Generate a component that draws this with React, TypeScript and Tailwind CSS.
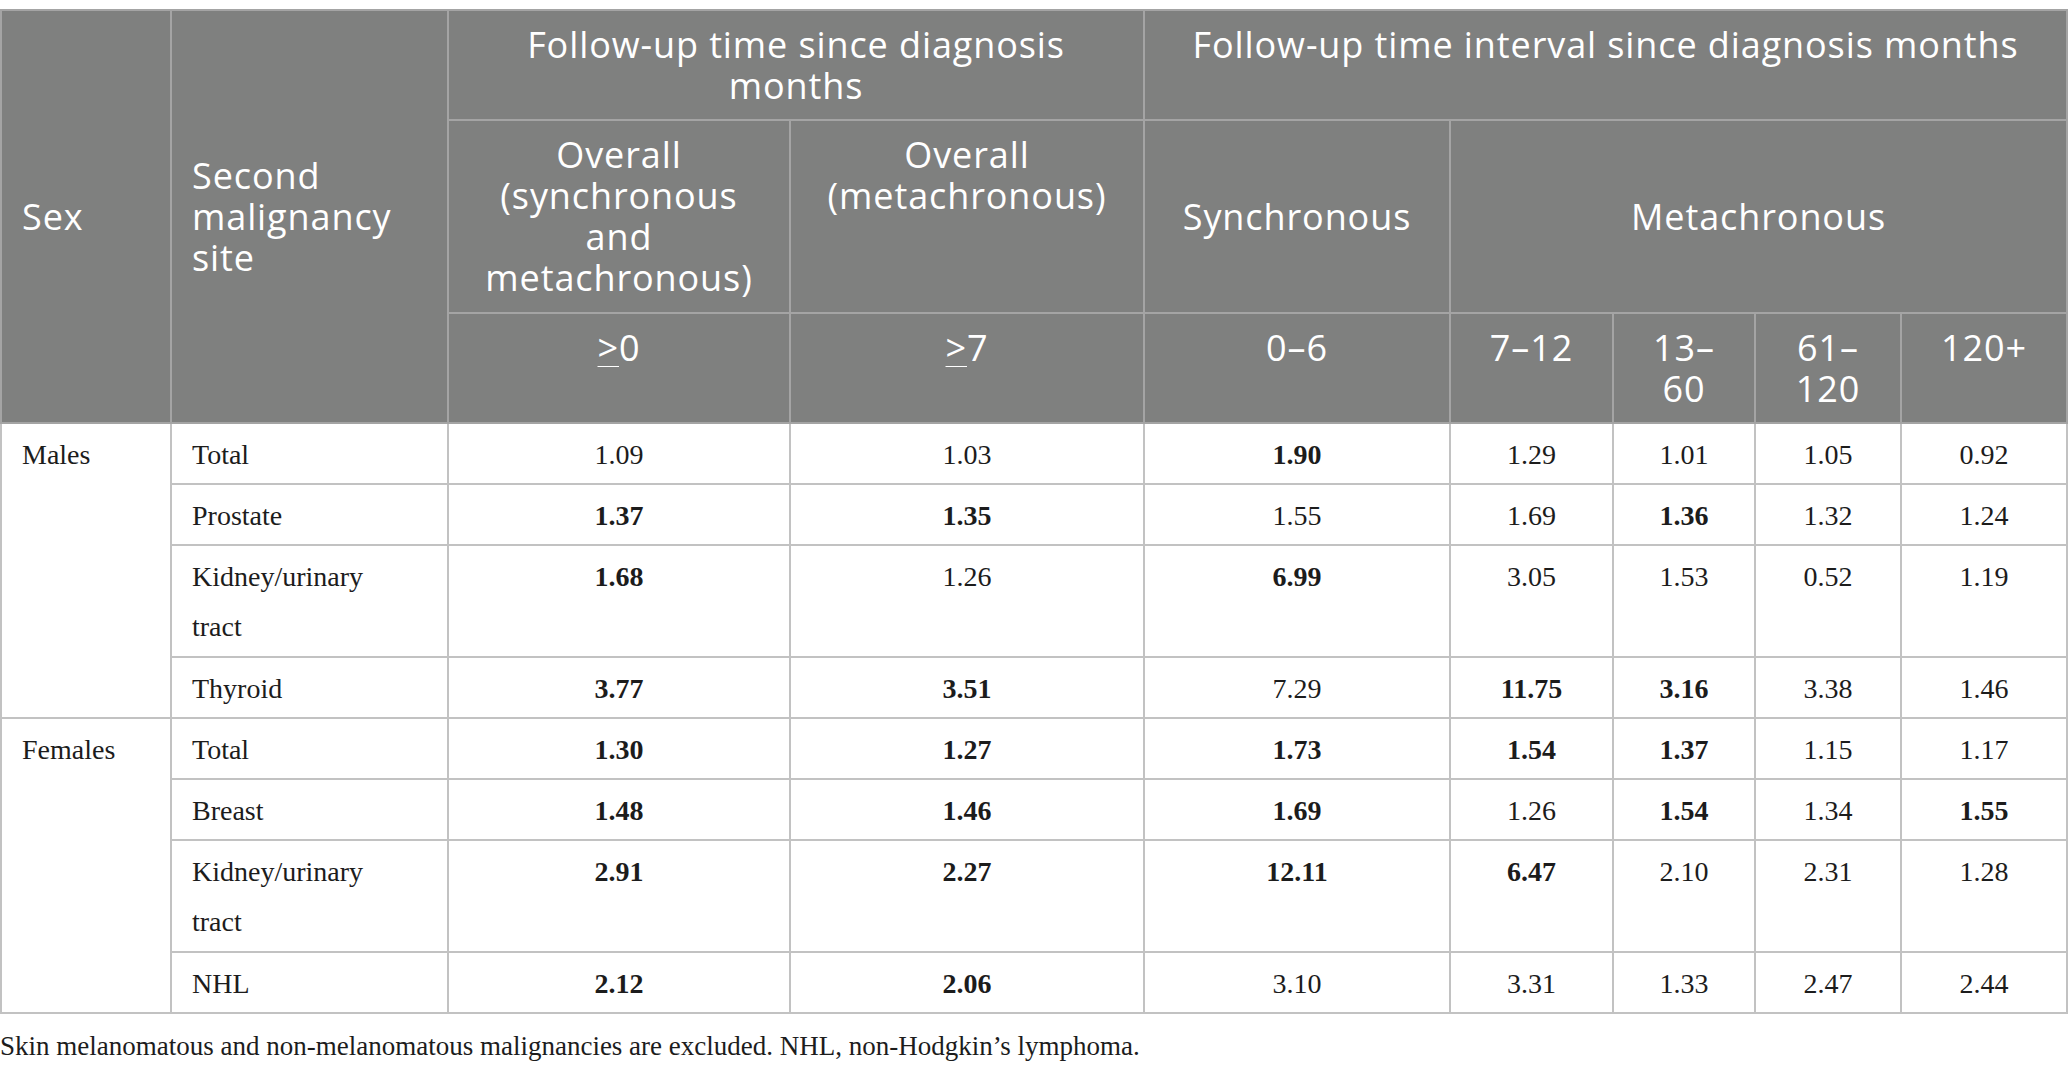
import React from 'react';

type Cell = { v: string; b?: boolean };

const rows: { sex?: string; span?: number; site: React.ReactNode; tall?: boolean; cells: Cell[] }[] = [
  {
    sex: 'Males',
    span: 4,
    site: 'Total',
    cells: [{ v: '1.09' }, { v: '1.03' }, { v: '1.90', b: true }, { v: '1.29' }, { v: '1.01' }, { v: '1.05' }, { v: '0.92' }],
  },
  {
    site: 'Prostate',
    cells: [{ v: '1.37', b: true }, { v: '1.35', b: true }, { v: '1.55' }, { v: '1.69' }, { v: '1.36', b: true }, { v: '1.32' }, { v: '1.24' }],
  },
  {
    site: (
      <>
        Kidney/urinary
        <br />
        tract
      </>
    ),
    tall: true,
    cells: [{ v: '1.68', b: true }, { v: '1.26' }, { v: '6.99', b: true }, { v: '3.05' }, { v: '1.53' }, { v: '0.52' }, { v: '1.19' }],
  },
  {
    site: 'Thyroid',
    cells: [{ v: '3.77', b: true }, { v: '3.51', b: true }, { v: '7.29' }, { v: '11.75', b: true }, { v: '3.16', b: true }, { v: '3.38' }, { v: '1.46' }],
  },
  {
    sex: 'Females',
    span: 4,
    site: 'Total',
    cells: [{ v: '1.30', b: true }, { v: '1.27', b: true }, { v: '1.73', b: true }, { v: '1.54', b: true }, { v: '1.37', b: true }, { v: '1.15' }, { v: '1.17' }],
  },
  {
    site: 'Breast',
    cells: [{ v: '1.48', b: true }, { v: '1.46', b: true }, { v: '1.69', b: true }, { v: '1.26' }, { v: '1.54', b: true }, { v: '1.34' }, { v: '1.55', b: true }],
  },
  {
    site: (
      <>
        Kidney/urinary
        <br />
        tract
      </>
    ),
    tall: true,
    cells: [{ v: '2.91', b: true }, { v: '2.27', b: true }, { v: '12.11', b: true }, { v: '6.47', b: true }, { v: '2.10' }, { v: '2.31' }, { v: '1.28' }],
  },
  {
    site: 'NHL',
    cells: [{ v: '2.12', b: true }, { v: '2.06', b: true }, { v: '3.10' }, { v: '3.31' }, { v: '1.33' }, { v: '2.47' }, { v: '2.44' }],
  },
];

const ge = <span className="underline decoration-1 underline-offset-[5px]">&gt;</span>;

export default function App() {
  const th = 'border-2 border-[#a4a4a4] font-normal tracking-[0.025em] px-[20px] py-[13px] leading-[41px] text-[36px] text-white';
  const td = 'border-2 border-[#c2c2c2] align-top px-[20px] pt-[6px] leading-[50px] text-[28px] text-[#1c1c1c]';

  return (
    <div className="min-h-screen w-[2068px] bg-white pt-[9px]">
      <table className="table-fixed border-collapse w-[2068px] font-['Liberation_Serif',serif]">
        <colgroup>
          <col className="w-[170px]" />
          <col className="w-[277px]" />
          <col className="w-[342px]" />
          <col className="w-[354px]" />
          <col className="w-[306px]" />
          <col className="w-[163px]" />
          <col className="w-[142px]" />
          <col className="w-[146px]" />
          <col className="w-[166px]" />
        </colgroup>
        <thead className="bg-[#7f807f] font-['Open_Sans',sans-serif]">
          <tr className="h-[109px]">
            <th rowSpan={3} className={`${th} text-left align-middle`}>Sex</th>
            <th rowSpan={3} className={`${th} text-left align-middle`}>
              Second
              <br />
              malignancy
              <br />
              site
            </th>
            <th colSpan={2} className={`${th} text-center align-top`}>
              Follow-up time since diagnosis
              <br />
              months
            </th>
            <th colSpan={5} className={`${th} text-center align-top`}>
              Follow-up time interval since diagnosis months
            </th>
          </tr>
          <tr className="h-[193px]">
            <th className={`${th} text-center align-top`}>
              Overall
              <br />
              (synchronous
              <br />
              and
              <br />
              metachronous)
            </th>
            <th className={`${th} text-center align-top`}>
              Overall
              <br />
              (metachronous)
            </th>
            <th className={`${th} text-center align-middle`}>Synchronous</th>
            <th colSpan={4} className={`${th} text-center align-middle`}>Metachronous</th>
          </tr>
          <tr className="h-[110px]">
            <th className={`${th} text-center align-top`}>{ge}0</th>
            <th className={`${th} text-center align-top`}>{ge}7</th>
            <th className={`${th} text-center align-top`}>0–6</th>
            <th className={`${th} text-center align-top`}>7–12</th>
            <th className={`${th} text-center align-top`}>
              13–
              <br />
              60
            </th>
            <th className={`${th} text-center align-top`}>
              61–
              <br />
              120
            </th>
            <th className={`${th} text-center align-top`}>120+</th>
          </tr>
        </thead>
        <tbody>
          {rows.map((r, i) => (
            <tr key={i} className={r.tall ? 'h-[112px]' : 'h-[61px]'}>
              {r.sex && (
                <td rowSpan={r.span} className={`${td} text-left`}>
                  {r.sex}
                </td>
              )}
              <td className={`${td} text-left`}>{r.site}</td>
              {r.cells.map((c, j) => (
                <td key={j} className={`${td} text-center ${c.b ? 'font-bold' : ''}`}>
                  {c.v}
                </td>
              ))}
            </tr>
          ))}
        </tbody>
      </table>
      <p className="mt-[16px] font-['Liberation_Serif',serif] text-[27px] leading-[32px] text-[#1c1c1c]">
        Skin melanomatous and non-melanomatous malignancies are excluded. NHL, non-Hodgkin’s lymphoma.
      </p>
    </div>
  );
}
